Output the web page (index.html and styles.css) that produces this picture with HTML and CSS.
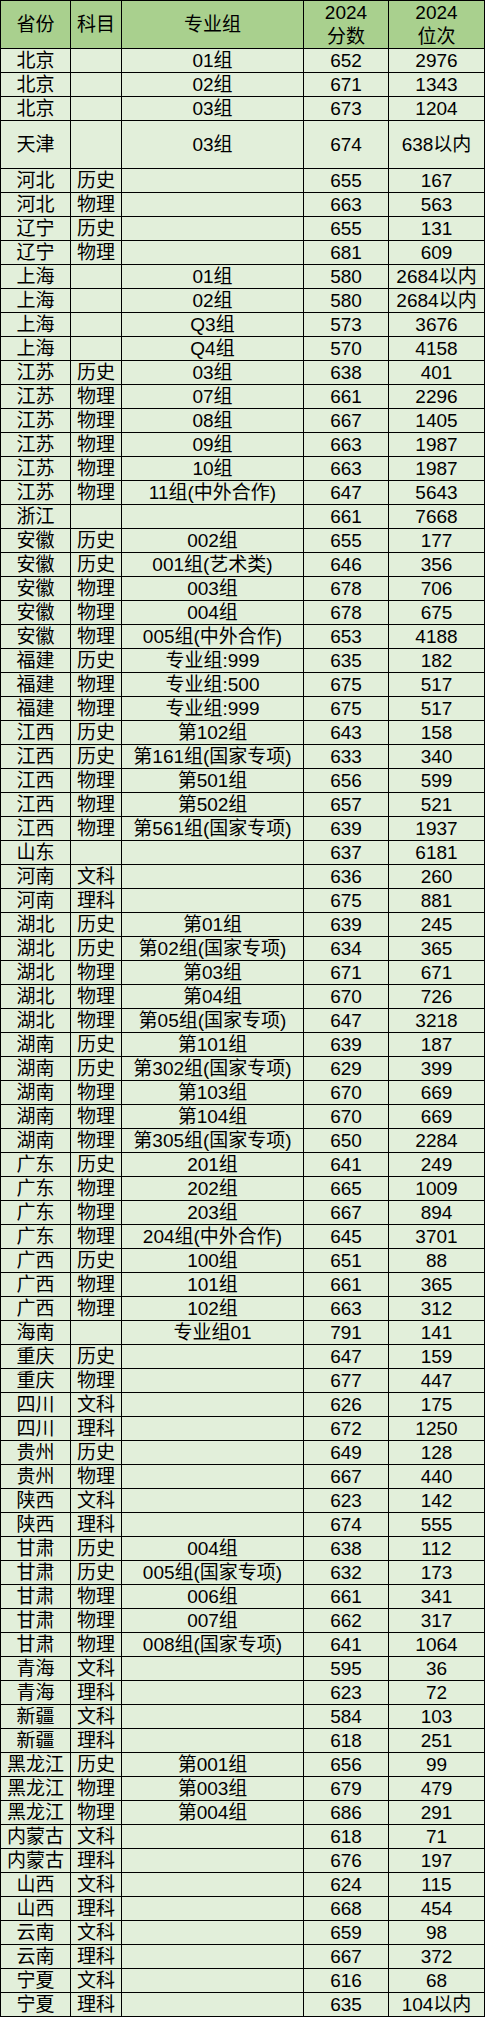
FILE: index.html
```html
<!DOCTYPE html>
<html lang="zh-CN">
<head>
<meta charset="utf-8">
<title>2024 分数位次</title>
<link rel="stylesheet" href="styles.css">
</head>
<body>
<div class="sheet">
  <div class="row head"><div>省份</div><div>科目</div><div>专业组</div><div>2024<br>分数</div><div>2024<br>位次</div></div>
  <div class="row"><div>北京</div><div></div><div>01组</div><div>652</div><div>2976</div></div>
  <div class="row"><div>北京</div><div></div><div>02组</div><div>671</div><div>1343</div></div>
  <div class="row"><div>北京</div><div></div><div>03组</div><div>673</div><div>1204</div></div>
  <div class="row tall"><div>天津</div><div></div><div>03组</div><div>674</div><div>638以内</div></div>
  <div class="row"><div>河北</div><div>历史</div><div></div><div>655</div><div>167</div></div>
  <div class="row"><div>河北</div><div>物理</div><div></div><div>663</div><div>563</div></div>
  <div class="row"><div>辽宁</div><div>历史</div><div></div><div>655</div><div>131</div></div>
  <div class="row"><div>辽宁</div><div>物理</div><div></div><div>681</div><div>609</div></div>
  <div class="row"><div>上海</div><div></div><div>01组</div><div>580</div><div>2684以内</div></div>
  <div class="row"><div>上海</div><div></div><div>02组</div><div>580</div><div>2684以内</div></div>
  <div class="row"><div>上海</div><div></div><div>Q3组</div><div>573</div><div>3676</div></div>
  <div class="row"><div>上海</div><div></div><div>Q4组</div><div>570</div><div>4158</div></div>
  <div class="row"><div>江苏</div><div>历史</div><div>03组</div><div>638</div><div>401</div></div>
  <div class="row"><div>江苏</div><div>物理</div><div>07组</div><div>661</div><div>2296</div></div>
  <div class="row"><div>江苏</div><div>物理</div><div>08组</div><div>667</div><div>1405</div></div>
  <div class="row"><div>江苏</div><div>物理</div><div>09组</div><div>663</div><div>1987</div></div>
  <div class="row"><div>江苏</div><div>物理</div><div>10组</div><div>663</div><div>1987</div></div>
  <div class="row"><div>江苏</div><div>物理</div><div>11组(中外合作)</div><div>647</div><div>5643</div></div>
  <div class="row"><div>浙江</div><div></div><div></div><div>661</div><div>7668</div></div>
  <div class="row"><div>安徽</div><div>历史</div><div>002组</div><div>655</div><div>177</div></div>
  <div class="row"><div>安徽</div><div>历史</div><div>001组(艺术类)</div><div>646</div><div>356</div></div>
  <div class="row"><div>安徽</div><div>物理</div><div>003组</div><div>678</div><div>706</div></div>
  <div class="row"><div>安徽</div><div>物理</div><div>004组</div><div>678</div><div>675</div></div>
  <div class="row"><div>安徽</div><div>物理</div><div>005组(中外合作)</div><div>653</div><div>4188</div></div>
  <div class="row"><div>福建</div><div>历史</div><div>专业组:999</div><div>635</div><div>182</div></div>
  <div class="row"><div>福建</div><div>物理</div><div>专业组:500</div><div>675</div><div>517</div></div>
  <div class="row"><div>福建</div><div>物理</div><div>专业组:999</div><div>675</div><div>517</div></div>
  <div class="row"><div>江西</div><div>历史</div><div>第102组</div><div>643</div><div>158</div></div>
  <div class="row"><div>江西</div><div>历史</div><div>第161组(国家专项)</div><div>633</div><div>340</div></div>
  <div class="row"><div>江西</div><div>物理</div><div>第501组</div><div>656</div><div>599</div></div>
  <div class="row"><div>江西</div><div>物理</div><div>第502组</div><div>657</div><div>521</div></div>
  <div class="row"><div>江西</div><div>物理</div><div>第561组(国家专项)</div><div>639</div><div>1937</div></div>
  <div class="row"><div>山东</div><div></div><div></div><div>637</div><div>6181</div></div>
  <div class="row"><div>河南</div><div>文科</div><div></div><div>636</div><div>260</div></div>
  <div class="row"><div>河南</div><div>理科</div><div></div><div>675</div><div>881</div></div>
  <div class="row"><div>湖北</div><div>历史</div><div>第01组</div><div>639</div><div>245</div></div>
  <div class="row"><div>湖北</div><div>历史</div><div>第02组(国家专项)</div><div>634</div><div>365</div></div>
  <div class="row"><div>湖北</div><div>物理</div><div>第03组</div><div>671</div><div>671</div></div>
  <div class="row"><div>湖北</div><div>物理</div><div>第04组</div><div>670</div><div>726</div></div>
  <div class="row"><div>湖北</div><div>物理</div><div>第05组(国家专项)</div><div>647</div><div>3218</div></div>
  <div class="row"><div>湖南</div><div>历史</div><div>第101组</div><div>639</div><div>187</div></div>
  <div class="row"><div>湖南</div><div>历史</div><div>第302组(国家专项)</div><div>629</div><div>399</div></div>
  <div class="row"><div>湖南</div><div>物理</div><div>第103组</div><div>670</div><div>669</div></div>
  <div class="row"><div>湖南</div><div>物理</div><div>第104组</div><div>670</div><div>669</div></div>
  <div class="row"><div>湖南</div><div>物理</div><div>第305组(国家专项)</div><div>650</div><div>2284</div></div>
  <div class="row"><div>广东</div><div>历史</div><div>201组</div><div>641</div><div>249</div></div>
  <div class="row"><div>广东</div><div>物理</div><div>202组</div><div>665</div><div>1009</div></div>
  <div class="row"><div>广东</div><div>物理</div><div>203组</div><div>667</div><div>894</div></div>
  <div class="row"><div>广东</div><div>物理</div><div>204组(中外合作)</div><div>645</div><div>3701</div></div>
  <div class="row"><div>广西</div><div>历史</div><div>100组</div><div>651</div><div>88</div></div>
  <div class="row"><div>广西</div><div>物理</div><div>101组</div><div>661</div><div>365</div></div>
  <div class="row"><div>广西</div><div>物理</div><div>102组</div><div>663</div><div>312</div></div>
  <div class="row"><div>海南</div><div></div><div>专业组01</div><div>791</div><div>141</div></div>
  <div class="row"><div>重庆</div><div>历史</div><div></div><div>647</div><div>159</div></div>
  <div class="row"><div>重庆</div><div>物理</div><div></div><div>677</div><div>447</div></div>
  <div class="row"><div>四川</div><div>文科</div><div></div><div>626</div><div>175</div></div>
  <div class="row"><div>四川</div><div>理科</div><div></div><div>672</div><div>1250</div></div>
  <div class="row"><div>贵州</div><div>历史</div><div></div><div>649</div><div>128</div></div>
  <div class="row"><div>贵州</div><div>物理</div><div></div><div>667</div><div>440</div></div>
  <div class="row"><div>陕西</div><div>文科</div><div></div><div>623</div><div>142</div></div>
  <div class="row"><div>陕西</div><div>理科</div><div></div><div>674</div><div>555</div></div>
  <div class="row"><div>甘肃</div><div>历史</div><div>004组</div><div>638</div><div>112</div></div>
  <div class="row"><div>甘肃</div><div>历史</div><div>005组(国家专项)</div><div>632</div><div>173</div></div>
  <div class="row"><div>甘肃</div><div>物理</div><div>006组</div><div>661</div><div>341</div></div>
  <div class="row"><div>甘肃</div><div>物理</div><div>007组</div><div>662</div><div>317</div></div>
  <div class="row"><div>甘肃</div><div>物理</div><div>008组(国家专项)</div><div>641</div><div>1064</div></div>
  <div class="row"><div>青海</div><div>文科</div><div></div><div>595</div><div>36</div></div>
  <div class="row"><div>青海</div><div>理科</div><div></div><div>623</div><div>72</div></div>
  <div class="row"><div>新疆</div><div>文科</div><div></div><div>584</div><div>103</div></div>
  <div class="row"><div>新疆</div><div>理科</div><div></div><div>618</div><div>251</div></div>
  <div class="row"><div>黑龙江</div><div>历史</div><div>第001组</div><div>656</div><div>99</div></div>
  <div class="row"><div>黑龙江</div><div>物理</div><div>第003组</div><div>679</div><div>479</div></div>
  <div class="row"><div>黑龙江</div><div>物理</div><div>第004组</div><div>686</div><div>291</div></div>
  <div class="row"><div>内蒙古</div><div>文科</div><div></div><div>618</div><div>71</div></div>
  <div class="row"><div>内蒙古</div><div>理科</div><div></div><div>676</div><div>197</div></div>
  <div class="row"><div>山西</div><div>文科</div><div></div><div>624</div><div>115</div></div>
  <div class="row"><div>山西</div><div>理科</div><div></div><div>668</div><div>454</div></div>
  <div class="row"><div>云南</div><div>文科</div><div></div><div>659</div><div>98</div></div>
  <div class="row"><div>云南</div><div>理科</div><div></div><div>667</div><div>372</div></div>
  <div class="row"><div>宁夏</div><div>文科</div><div></div><div>616</div><div>68</div></div>
  <div class="row"><div>宁夏</div><div>理科</div><div></div><div>635</div><div>104以内</div></div>
</div>
</body>
</html>
```
FILE: styles.css
```css
html, body {
  margin: 0;
  padding: 0;
  background: #ffffff;
}

.sheet {
  display: flex;
  flex-direction: column;
  gap: 1px;
  width: 485px;
  box-sizing: border-box;
  padding: 1px;
  background: #000000;
  font-family: "Liberation Sans", "Noto Sans CJK SC", sans-serif;
  font-size: 19px;
  color: #000000;
}

.row {
  display: grid;
  grid-template-columns: 69px 50px 181px 84px 95px;
  gap: 1px;
  height: 23px;
}

.row > div {
  display: flex;
  align-items: center;
  justify-content: center;
  text-align: center;
  background: #e2efda;
  line-height: 23px;
  white-space: nowrap;
  overflow: hidden;
}

.row.tall {
  height: 47px;
}

.row.head {
  height: 47px;
}

.row.head > div {
  background: #a9d08e;
  line-height: 24px;
}
```
